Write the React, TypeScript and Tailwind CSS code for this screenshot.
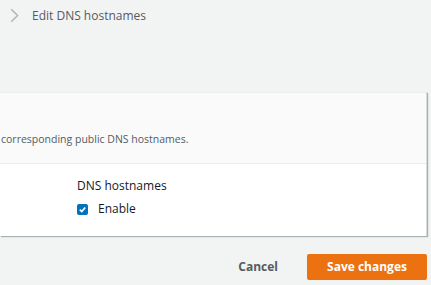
import React from "react";

export default function App() {
  return (
    <div
      className="w-[431px] h-[285px] bg-[#f2f3f3] overflow-hidden flex flex-col"
      style={{ fontFamily: '"Open Sans", "Noto Sans", Arial, sans-serif' }}
    >
      <div className="h-[31px] flex items-center pl-[10px] gap-[13px]">
        <svg width="9" height="15" viewBox="0 0 9 15" fill="none">
          <path d="M1.2 1.2 L7.6 7.5 L1.2 13.8" stroke="#aab7b8" strokeWidth="1.5" />
        </svg>
        <span className="text-[12px] text-[#545b64] leading-none">Edit DNS hostnames</span>
      </div>
      <div className="h-[61px]" />
      <div className="mr-[4px] border-t border-[#eaeded] border-r border-r-[#d5dbdb] shadow-[1px_1px_1px_0_rgba(0,28,36,0.3)] bg-white">
        <div className="h-[71px] bg-[#fafafa] border-b border-[#eaeded] flex items-end pb-[17px] pl-[1px]">
          <span className="text-[10.5px] text-[#545b64] leading-[14px]">corresponding public DNS hostnames.</span>
        </div>
        <div className="h-[72px] pl-[77px] pt-[14px] flex flex-col gap-[7px]">
          <span className="text-[12px] text-[#16191f] leading-[16px]">DNS hostnames</span>
          <label className="flex items-center gap-[10px]">
            <span className="w-[11px] h-[11px] rounded-[2px] bg-[#0073bb] flex items-center justify-center">
              <svg width="9" height="9" viewBox="0 0 10 10" fill="none">
                <path d="M2 5.2 L4.2 7.3 L8 2.8" stroke="white" strokeWidth="1.9" />
              </svg>
            </span>
            <span className="text-[12px] text-[#16191f] leading-[16px]">Enable</span>
          </label>
        </div>
      </div>
      <div className="flex justify-end items-center mt-[18px] pr-[4px] gap-[29px]">
        <span className="text-[12px] font-bold text-[#545b64]">Cancel</span>
        <button className="w-[120px] h-[26px] bg-[#ec7211] rounded-[2px] text-white text-[12px] font-bold flex items-center justify-center">
          Save changes
        </button>
      </div>
    </div>
  );
}
